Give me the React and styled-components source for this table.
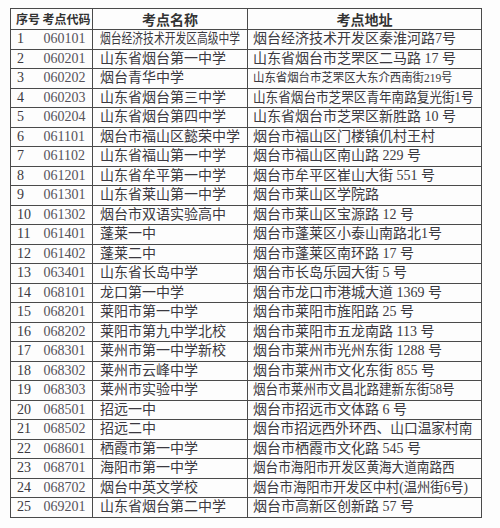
import React from 'react';
import styled, { createGlobalStyle } from 'styled-components';

const GlobalStyle = createGlobalStyle`
  html, body {
    margin: 0;
    padding: 0;
    background: #fdfdfd;
  }
  body {
    font-family: "Liberation Serif", "Noto Sans CJK SC", serif;
    color: #3b3940;
  }
`;

const Page = styled.div`
  width: 500px;
  height: 528px;
  padding: 8px 0 0 10px;
  box-sizing: border-box;
  overflow: hidden;
`;

const Table = styled.table`
  width: 471px;
  table-layout: fixed;
  border-collapse: collapse;
  border: 1px solid #4a4a4a;
`;

const HeadCell = styled.th`
  height: 20px;
  padding: 0 0 0 ${p => p.$pad || 0}px;
  font-size: ${p => p.$size || 14}px;
  font-weight: 700;
  font-family: "Noto Sans CJK SC", sans-serif;
  text-align: ${p => (p.$center ? 'center' : 'left')};
  white-space: nowrap;
  border-bottom: 1px solid #4a4a4a;
  border-left: ${p => (p.$line ? '1px solid #4a4a4a' : 'none')};
  color: #333;
  line-height: 1;
`;

const Cell = styled.td`
  height: 18.5px;
  padding: 0 0 0 ${p => p.$pad || 0}px;
  font-size: 14px;
  line-height: 1;
  white-space: nowrap;
  overflow: hidden;
  border-top: 1px solid #4a4a4a;
  border-left: ${p => (p.$line ? '1px solid #4a4a4a' : 'none')};
  color: ${p => (p.$muted ? '#55525a' : '#3b3940')};
`;

const Fit = styled.span`
  display: inline-block;
  font-size: ${p => p.$size || 14}px;
  transform: scaleX(${p => p.$sx || 1});
  transform-origin: left center;
`;

const rows = [
  ['1', '060101', '烟台经济技术开发区高级中学', '烟台经济技术开发区秦淮河路7号', 0.77, 1, 14],
  ['2', '060201', '山东省烟台第一中学', '山东省烟台市芝罘区二马路 17 号', 1, 1, 14],
  ['3', '060202', '烟台青华中学', '山东省烟台市芝罘区大东介西南街219号', 1, 0.95, 12],
  ['4', '060203', '山东省烟台第三中学', '山东省烟台市芝罘区青年南路复光街1号', 1, 0.9, 14],
  ['5', '060204', '山东省烟台第四中学', '山东省烟台市芝罘区新胜路 10 号', 1, 1, 14],
  ['6', '061101', '烟台市福山区懿荣中学', '烟台市福山区门楼镇仉村王村', 1, 1, 14],
  ['7', '061102', '山东省福山第一中学', '烟台市福山区南山路 229 号', 1, 1, 14],
  ['8', '061201', '山东省牟平第一中学', '烟台市牟平区崔山大街 551 号', 1, 1, 14],
  ['9', '061301', '山东省莱山第一中学', '烟台市莱山区学院路', 1, 1, 14],
  ['10', '061302', '烟台市双语实验高中', '烟台市莱山区宝源路 12 号', 1, 1, 14],
  ['11', '061401', '蓬莱一中', '烟台市蓬莱区小泰山南路北1号', 1, 1, 14],
  ['12', '061402', '蓬莱二中', '烟台市蓬莱区南环路 17 号', 1, 1, 14],
  ['13', '063401', '山东省长岛中学', '烟台市长岛乐园大街 5 号', 1, 1, 14],
  ['14', '068101', '龙口第一中学', '烟台市龙口市港城大道 1369 号', 1, 1, 14],
  ['15', '068201', '莱阳市第一中学', '烟台市莱阳市旌阳路 25 号', 1, 1, 14],
  ['16', '068202', '莱阳市第九中学北校', '烟台市莱阳市五龙南路 113 号', 1, 1, 14],
  ['17', '068301', '莱州市第一中学新校', '烟台市莱州市光州东街 1288 号', 1, 1, 14],
  ['18', '068302', '莱州市云峰中学', '烟台市莱州市文化东街 855 号', 1, 1, 14],
  ['19', '068303', '莱州市实验中学', '烟台市莱州市文昌北路建新东街58号', 1, 0.9, 14],
  ['20', '068501', '招远一中', '烟台市招远市文体路 6 号', 1, 1, 14],
  ['21', '068502', '招远二中', '烟台市招远西外环西、山口温家村南', 1, 0.98, 14],
  ['22', '068601', '栖霞市第一中学', '烟台市栖霞市文化路 545 号', 1, 1, 14],
  ['23', '068701', '海阳市第一中学', '烟台市海阳市开发区黄海大道南路西', 1, 0.9, 14],
  ['24', '068702', '烟台中英文学校', '烟台市海阳市开发区中村(温州街6号)', 1, 0.95, 14],
  ['25', '069201', '山东省烟台第二中学', '烟台市高新区创新路 57 号', 1, 1, 14],
];

export default function App() {
  return (
    <Page>
      <GlobalStyle />
      <Table>
        <colgroup>
          <col style={{ width: 30 }} />
          <col style={{ width: 52 }} />
          <col style={{ width: 155 }} />
          <col style={{ width: 234 }} />
        </colgroup>
        <thead>
          <tr>
            <HeadCell $pad={5} $size={12}>序号</HeadCell>
            <HeadCell $pad={2} $size={12}>考点代码</HeadCell>
            <HeadCell $center $line>考点名称</HeadCell>
            <HeadCell $center $line>考点地址</HeadCell>
          </tr>
        </thead>
        <tbody>
          {rows.map(([no, code, name, addr, nameSx, addrSx, addrSize]) => (
            <tr key={no}>
              <Cell $pad={6}>{no}</Cell>
              <Cell $pad={3} $muted>{code}</Cell>
              <Cell $pad={7} $line>
                <Fit $sx={nameSx}>{name}</Fit>
              </Cell>
              <Cell $pad={5} $line>
                <Fit $sx={addrSx} $size={addrSize}>{addr}</Fit>
              </Cell>
            </tr>
          ))}
        </tbody>
      </Table>
    </Page>
  );
}
